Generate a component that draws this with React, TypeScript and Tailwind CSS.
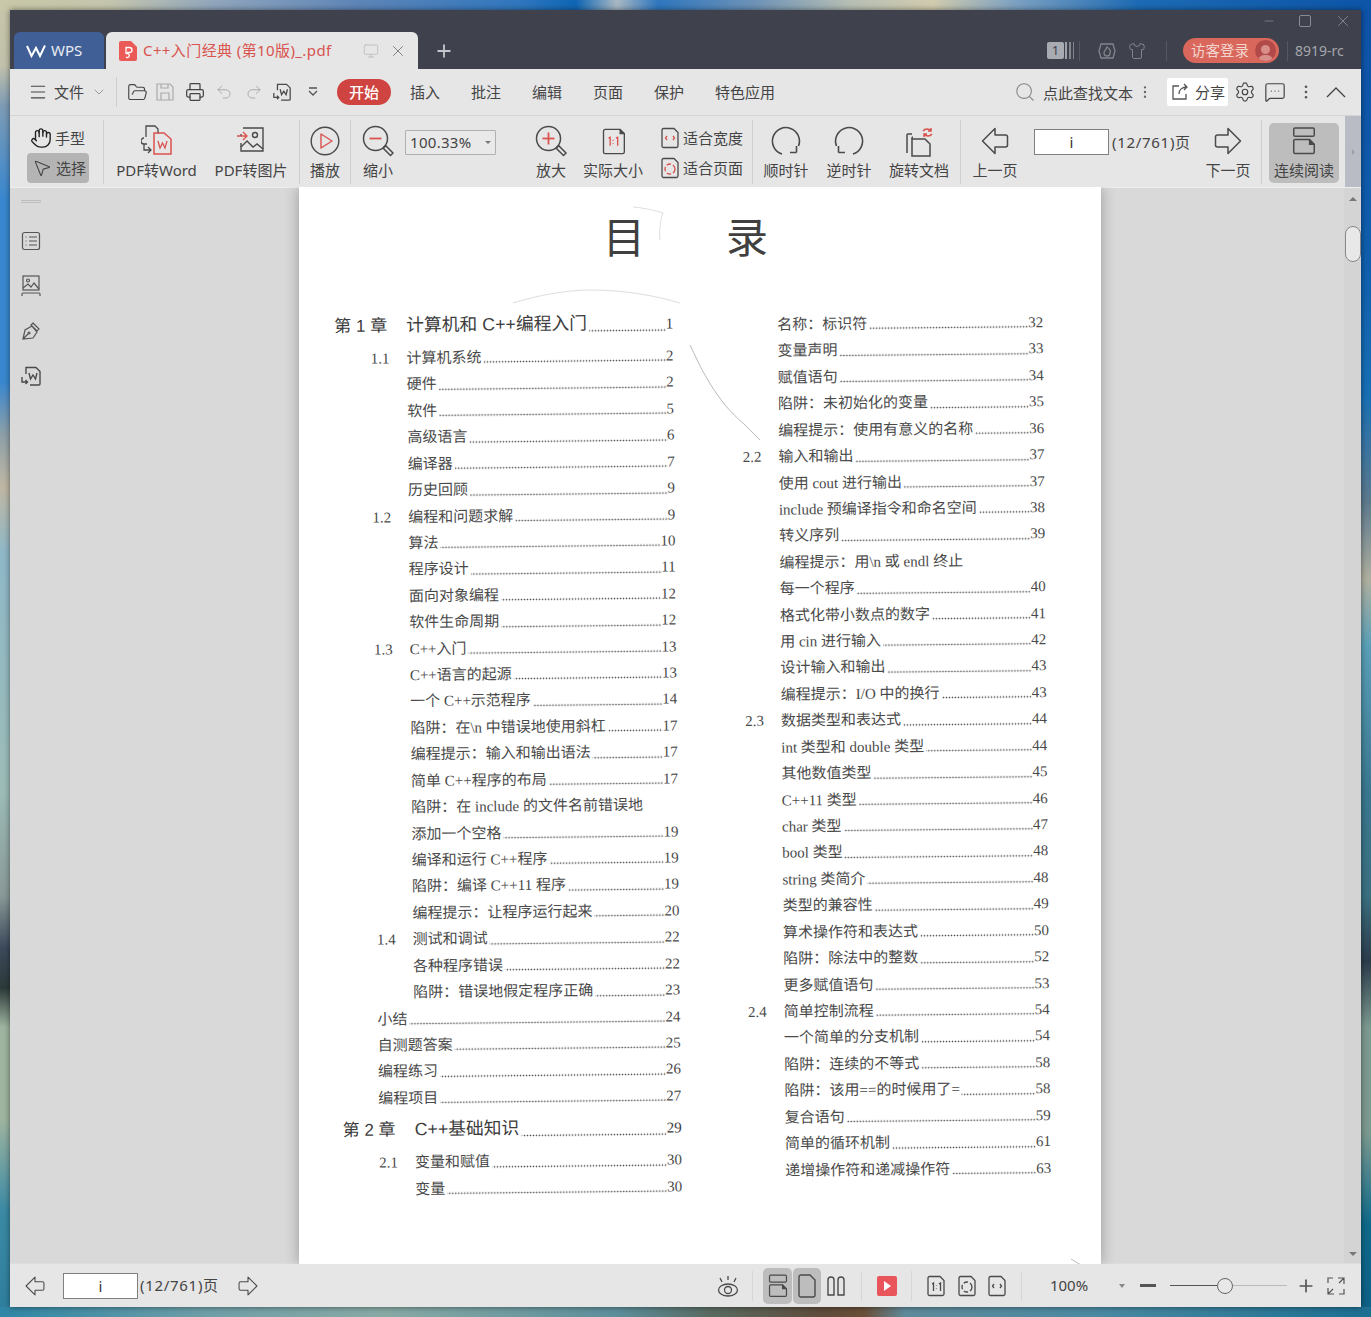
import React from "react";
import { FolderOpen, Printer, Undo2, Redo2, Search, Settings, MessageSquareMore, MoreVertical, ChevronDown, Hand, MousePointer2, Menu, Plus, X, Minus, Shirt, Monitor } from "lucide-react";

const S = "#4a4a4a";
const R = "#d9534f";

function DocW({ s = 22 }: { s?: number }) {
  return (
    <svg width={s} height={s} viewBox="0 0 22 22" fill="none" stroke={S} strokeWidth="1.4">
      <path d="M6 9V2.5h10l4 4V19a1 1 0 0 1-1 1H10" />
      <path d="M9 8l1.5 6L13 10l2.5 4L17 8" />
      <path d="M2 12v5h5M5.500 15l2 2-2 2" />
    </svg>
  );
}
function PageIcon({ w = 30, h = 32, children }: { w?: number; h?: number; children?: React.ReactNode }) {
  return (
    <svg width={w} height={h} viewBox="0 0 30 32" fill="none" stroke={S} strokeWidth="1.6">
      <path d="M3 3.500a2 2 0 0 1 2-2h18l5 5V28.500a2 2 0 0 1-2 2H5a2 2 0 0 1-2-2z" />
      <path d="M23 1.500v5h5" fill={S} />
      {children}
    </svg>
  );
}
function Magnifier({ plus }: { plus?: boolean }) {
  return (
    <svg width="32" height="32" viewBox="0 0 32 32" fill="none" stroke={S} strokeWidth="1.5">
      <circle cx="13.500" cy="13.500" r="12" />
      <path d="M22 22l2-1 7 7-2.500 2.500-7-7z" />
      <path d="M7.500 13.500h12" stroke={R} strokeWidth="1.8" />
      {plus && <path d="M13.500 7.500v12" stroke={R} strokeWidth="1.800" />}
    </svg>
  );
}
function Tool({ w, ml = 0, label, children }: { w: number; ml?: number; label: string; children: React.ReactNode }) {
  return (
    <div className="flex flex-col items-center shrink-0" style={{ width: w, marginLeft: ml }}>
      <div className="h-[34px] mt-[8px] flex items-center justify-center">{children}</div>
      <div className="h-[20px] mt-[2px] leading-[20px] whitespace-nowrap text-[15px] text-[#444]">{label}</div>
    </div>
  );
}
const VLine = ({ ml = 0 }: { ml?: number }) => (
  <div className="w-px h-[64px] bg-[#cfcfcf] shrink-0 self-center" style={{ marginLeft: ml }} />
);
const BLine = ({ ml = 0 }: { ml?: number }) => (
  <div className="w-px h-[30px] bg-[#d6d6d6] shrink-0" style={{ marginLeft: ml }} />
);
function Arrow({ right, s = 28 }: { right?: boolean; s?: number }) {
  return (
    <svg width={s} height={s} viewBox="0 0 28 28" fill="none" stroke={S} strokeWidth="1.500" className={right ? "-scale-x-100" : ""}>
      <path d="M1.500 14L14 1.500V8h10.500a2 2 0 0 1 2 2v8a2 2 0 0 1-2 2H14v6.500z" strokeLinejoin="round" />
    </svg>
  );
}
function FitW({ s = 20, stroke = R }: { s?: number; stroke?: string }) {
  return (
    <svg width={s} height={s + 2} viewBox="0 0 20 22" fill="none" stroke={S} strokeWidth="1.300">
      <path d="M2 3a1.500 1.500 0 0 1 1.500-1.500H14L18 5.500V19a1.500 1.500 0 0 1-1.500 1.500h-13A1.500 1.500 0 0 1 2 19z" />
      <path d="M7 9l-1.500 2L7 13M13 9l1.500 2L13 13" stroke={stroke} />
    </svg>
  );
}
function FitP({ s = 20, stroke = R }: { s?: number; stroke?: string }) {
  return (
    <svg width={s} height={s + 2} viewBox="0 0 20 22" fill="none" stroke={S} strokeWidth="1.300">
      <path d="M2 3a1.500 1.500 0 0 1 1.500-1.500H14L18 5.500V19a1.500 1.500 0 0 1-1.500 1.500h-13A1.500 1.500 0 0 1 2 19z" />
      <circle cx="10" cy="12" r="5" stroke={stroke} strokeDasharray="4.500 2" />
    </svg>
  );
}
function OneOne({ s = 20, stroke = S }: { s?: number; stroke?: string }) {
  return (
    <svg width={s} height={s + 2} viewBox="0 0 20 22" fill="none" stroke={S} strokeWidth="1.300">
      <path d="M2 3a1.500 1.500 0 0 1 1.500-1.500H14L18 5.500V19a1.500 1.500 0 0 1-1.500 1.500h-13A1.500 1.500 0 0 1 2 19z" />
      <path d="M6 9l1.500-1v8M13 9l1.500-1v8M10.500 10.500v.5M10.500 13.500v.5" stroke={stroke} />
    </svg>
  );
}
function Rotate({ flip }: { flip?: boolean }) {
  return (
    <svg width="32" height="32" viewBox="0 0 32 32" fill="none" stroke={S} strokeWidth="1.600" className={flip ? "-scale-x-100" : ""}>
      <path d="M12 29A13.500 13.500 0 1 1 28.500 21" />
      <path d="M26.500 27.500v-6.500M26.500 27.500h-6.500" />
    </svg>
  );
}
function Continuous({ w = 26, h = 28 }: { w?: number; h?: number }) {
  return (
    <svg width={w} height={h} viewBox="0 0 26 30" fill="none" stroke={S} strokeWidth="1.600">
      <rect x="2" y="1" width="22" height="9" rx="1.500" />
      <path d="M2 15a1.500 1.500 0 0 1 1.500-1.500H19l5 5V27a1.500 1.500 0 0 1-1.500 1.500h-19A1.500 1.500 0 0 1 2 27z" />
      <path d="M19 13.500v5h5" fill={S} />
    </svg>
  );
}

type Row = { n?: string; t: string; p?: string; ch?: boolean };

const left: Row[] = [
  { ch: true, n: "第 1 章", t: "计算机和 C++编程入门", p: "1" },
  { n: "1.1", t: "计算机系统", p: "2" },
  { t: "硬件", p: "2" },
  { t: "软件", p: "5" },
  { t: "高级语言", p: "6" },
  { t: "编译器", p: "7" },
  { t: "历史回顾", p: "9" },
  { n: "1.2", t: "编程和问题求解", p: "9" },
  { t: "算法", p: "10" },
  { t: "程序设计", p: "11" },
  { t: "面向对象编程", p: "12" },
  { t: "软件生命周期", p: "12" },
  { n: "1.3", t: "C++入门", p: "13" },
  { t: "C++语言的起源", p: "13" },
  { t: "一个 C++示范程序", p: "14" },
  { t: "陷阱：在\\n 中错误地使用斜杠", p: "17" },
  { t: "编程提示：输入和输出语法", p: "17" },
  { t: "简单 C++程序的布局", p: "17" },
  { t: "陷阱：在 include 的文件名前错误地" },
  { t: "添加一个空格", p: "19" },
  { t: "编译和运行 C++程序", p: "19" },
  { t: "陷阱：编译 C++11 程序", p: "19" },
  { t: "编程提示：让程序运行起来", p: "20" },
  { n: "1.4", t: "测试和调试", p: "22" },
  { t: "各种程序错误", p: "22" },
  { t: "陷阱：错误地假定程序正确", p: "23" },
  { n: "小结", t: "", p: "24" },
  { n: "自测题答案", t: "", p: "25" },
  { n: "编程练习", t: "", p: "26" },
  { n: "编程项目", t: "", p: "27" },
  { ch: true, n: "第 2 章", t: "C++基础知识", p: "29" },
  { n: "2.1", t: "变量和赋值", p: "30" },
  { t: "变量", p: "30" },
];

const right: Row[] = [
  { t: "名称：标识符", p: "32" },
  { t: "变量声明", p: "33" },
  { t: "赋值语句", p: "34" },
  { t: "陷阱：未初始化的变量", p: "35" },
  { t: "编程提示：使用有意义的名称", p: "36" },
  { n: "2.2", t: "输入和输出", p: "37" },
  { t: "使用 cout 进行输出", p: "37" },
  { t: "include 预编译指令和命名空间", p: "38" },
  { t: "转义序列", p: "39" },
  { t: "编程提示：用\\n 或 endl 终止" },
  { t: "每一个程序", p: "40" },
  { t: "格式化带小数点的数字", p: "41" },
  { t: "用 cin 进行输入", p: "42" },
  { t: "设计输入和输出", p: "43" },
  { t: "编程提示：I/O 中的换行", p: "43" },
  { n: "2.3", t: "数据类型和表达式", p: "44" },
  { t: "int 类型和 double 类型", p: "44" },
  { t: "其他数值类型", p: "45" },
  { t: "C++11 类型", p: "46" },
  { t: "char 类型", p: "47" },
  { t: "bool 类型", p: "48" },
  { t: "string 类简介", p: "48" },
  { t: "类型的兼容性", p: "49" },
  { t: "算术操作符和表达式", p: "50" },
  { t: "陷阱：除法中的整数", p: "52" },
  { t: "更多赋值语句", p: "53" },
  { n: "2.4", t: "简单控制流程", p: "54" },
  { t: "一个简单的分支机制", p: "54" },
  { t: "陷阱：连续的不等式", p: "58" },
  { t: "陷阱：该用==的时候用了=", p: "58" },
  { t: "复合语句", p: "59" },
  { t: "简单的循环机制", p: "61" },
  { t: "递增操作符和递减操作符", p: "63" },
];

const Leader = () => (
  <span className="flex-1 min-w-0 self-end mb-[7px] ml-[2px] h-[3px] bg-[radial-gradient(circle,#4a4a4a_0.7px,transparent_1.1px)] bg-[length:3px_3px] bg-repeat-x bg-right" />
);

function TocRow({ r, numW }: { r: Row; numW: number }) {
  if (r.ch) {
    return (
      <div className="flex items-baseline h-[32px] leading-[32px] mt-[2px] mb-[4px] text-[#3c3c3c]">
        <span className="shrink-0 font-['Liberation_Sans','Noto_Sans_CJK_SC',sans-serif] text-[17px] whitespace-pre" style={{ width: numW }}>{r.n}</span>
        <span className="shrink-0 font-['Liberation_Sans','Noto_Sans_CJK_SC',sans-serif] text-[17.800px]">{r.t}</span>
        <Leader />
        <span className="shrink-0 text-[15px]">{r.p}</span>
      </div>
    );
  }
  const wide = !r.t && r.n;
  return (
    <div className="flex items-baseline h-[26.43px] leading-[26.43px] text-[15px] text-[#4a4a4a]">
      {wide ? (
        <span className="shrink-0 pl-[36px] whitespace-pre">{r.n}</span>
      ) : (
        <>
          {r.n ? (
            <span className="shrink-0 whitespace-pre text-right pr-[17px]" style={{ width: numW }}>{r.n}</span>
          ) : (
            <span className="shrink-0" style={{ width: numW }} />
          )}
          <span className="shrink-0 whitespace-pre">{r.t}</span>
        </>
      )}
      {r.p && <Leader />}
      {r.p && <span className="shrink-0">{r.p}</span>}
    </div>
  );
}

const wallpaper =
  "[background:linear-gradient(90deg,#c9c8a8_0%,#c5c6ae_8%,#8fa5bd_16%,#5f86b8_26%,#2f77bf_38%,#0f66b5_42%,#a9b9c4_45%,#2f77bf_48%,#6e93b7_55%,#b7bfb5_62%,#d2ccae_68%,#7ea2c2_74%,#1d6bb5_83%,#0d55a8_100%)_0_0/100%_10px_no-repeat,linear-gradient(90deg,#2f86a6_0%,#6f9fa8_15%,#88aaa5_28%,#5c8f9c_45%,#5a6a60_52%,#5e4c3c_60%,#6a4f38_63%,#5f8b9b_66%,#4a8aa2_80%,#1d6f92_100%)_0_1307px/100%_10px_no-repeat,linear-gradient(180deg,#c8c6aa_0%,#c2c2ac_5%,#7e9cb5_8%,#3a88d0_15%,#3a88d0_29%,#8ea0a8_33%,#c0b8a4_37%,#8fb8c8_42%,#9dbdb8_60%,#8a9a98_68%,#3c4a5c_72%,#2d3a3a_75%,#9fb5a0_78%,#9fb5a0_85%,#3b8aa5_92%,#2e7f9e_100%)_0_0/50%_100%_no-repeat,linear-gradient(180deg,#0e52a8_0%,#0f5fae_20%,#1870b5_30%,#5c7a8e_38%,#b0b0a0_44%,#5aa0b8_49%,#3a7890_60%,#3a7080_68%,#2c3c4c_73%,#7c9a90_78%,#7c9a90_86%,#0e6a8a_93%,#0e5f86_100%)_100%_0/50%_100%_no-repeat]";

export default function App() {
  return (
    <div className={`w-[1371px] h-[1317px] p-[10px] overflow-hidden font-['Noto_Sans','Noto_Sans_CJK_SC',sans-serif] ${wallpaper}`}>
      <div className="w-[1351px] h-[1297px] flex flex-col shadow-[0_0_6px_rgba(0,0,0,0.5)]">
        {/* title bar */}
        <div className="h-[59px] bg-[#3f424d] flex flex-col shrink-0">
          <div className="h-[22px] flex items-center justify-end text-[#8a8c93] pr-[9px] gap-[23px]">
            <Minus size={14} strokeWidth={1.2} />
            <div className="w-[12px] h-[12px] border border-[#8a8c93] rounded-[2px]" />
            <X size={18} strokeWidth={1.2} />
          </div>
          <div className="h-[37px] flex items-center">
            <div className="ml-[4px] w-[90px] h-[37px] rounded-t-[6px] bg-[#3f5f96] text-[#e8ecf4] flex items-center pl-[12px] gap-[5px] text-[15px]">
              <svg width="20" height="14" viewBox="0 0 20 14" fill="none" stroke="#fff" strokeWidth="2"><path d="M1 2l4.500 10L10 4l4 8L19 1.500" /></svg>
              <span>WPS</span>
            </div>
            <div className="ml-[2px] w-[312px] h-[37px] rounded-t-[6px] bg-[#e6e6e6] flex items-center pl-[13px]">
              <svg width="18" height="20" viewBox="0 0 18 20"><path d="M2 0h10l6 6v12a2 2 0 0 1-2 2H2a2 2 0 0 1-2-2V2a2 2 0 0 1 2-2z" fill="#ea5a56" /><path d="M7 13a2 2 0 1 1 0 3M7 13V6.500h3.500a2.500 2.500 0 0 1 0 5H8" fill="none" stroke="#fff" strokeWidth="1.300" /></svg>
              <span className="ml-[6px] text-[15px] tracking-[0.4px] text-[#d9534f] whitespace-nowrap w-[220px]">C++入门经典 (第10版)_.pdf</span>
              <Monitor size={16} strokeWidth={1.2} className="text-[#b9b9b9]" />
              <X size={18} strokeWidth={1.2} className="ml-[10px] text-[#777]" />
            </div>
            <Plus size={20} strokeWidth={2.2} className="ml-[16px] text-[#c5c7cc]" />
            <div className="flex-1" />
            <div className="w-[17px] h-[17px] bg-[#a9abb2] rounded-[2px] text-[#3f424d] text-[13px] leading-[17px] text-center">1</div>
            <div className="ml-[1px] w-[9px] h-[17px] flex gap-[2px]">
              <div className="w-[2px] h-full bg-[#a0a2a8]" /><div className="w-[2px] h-full bg-[#83858c]" /><div className="w-[1px] h-full bg-[#83858c]" />
            </div>
            <div className="ml-[5px] w-px h-[20px] bg-[#55585f]" />
            <svg className="ml-[18px]" width="18" height="18" viewBox="0 0 18 18" fill="none" stroke="#83858c" strokeWidth="1.300"><path d="M3 2h12l2 7-2 7H3L1 9z" /><path d="M9 5c3 2 4 4 3 6a3 3 0 0 1-6 0c0-2 2-3 3-6z" /></svg>
            <Shirt size={18} strokeWidth={1.3} className="ml-[12px] text-[#83858c]" />
            <div className="ml-[20px] w-px h-[20px] bg-[#55585f]" />
            <div className="ml-[16px] w-[96px] h-[25px] rounded-full bg-[#d9675c] flex items-center pl-[8px] text-[14.500px] text-[#f2d5cf]">
              <span className="w-[62px] whitespace-nowrap">访客登录</span>
              <div className="ml-[2px] w-[21px] h-[21px] rounded-full bg-[#b24a4a] flex flex-col items-center justify-end overflow-hidden">
                <div className="w-[9px] h-[9px] rounded-full bg-[#d88f8a]" />
                <div className="mt-[1px] w-[15px] h-[6px] rounded-t-full bg-[#d88f8a]" />
              </div>
            </div>
            <div className="ml-[8px] w-px h-[20px] bg-[#55585f]" />
            <div className="ml-[7px] mr-[16px] w-[50px] text-[14px] text-[#a5a7ac] whitespace-nowrap">8919-rc</div>
          </div>
        </div>

        {/* menu bar */}
        <div className="h-[47px] bg-[#e6e6e6] border-b border-[#d4d4d4] flex items-center shrink-0 text-[15px] text-[#444] pr-[15px]">
          <Menu size={20} strokeWidth={1.3} className="ml-[18px]" />
          <span className="ml-[6px] w-[30px] whitespace-nowrap">文件</span>
          <ChevronDown size={16} strokeWidth={1.2} className="ml-[7px] text-[#888]" />
          <div className="ml-[9px] w-px h-[30px] bg-[#cfcfcf]" />
          <FolderOpen size={21} strokeWidth={1.3} className="ml-[10px] text-[#444]" />
          <svg className="ml-[7px]" width="20" height="20" viewBox="0 0 20 20" fill="none" stroke="#aaa" strokeWidth="1.200"><path d="M2 2h13l3 3v13H2zM6 18v-7h8v7M6 2v4h7V2" /></svg>
          <Printer size={20} strokeWidth={1.5} className="ml-[10px] text-[#444]" />
          <Undo2 size={18} strokeWidth={1.3} className="ml-[10px] text-[#aaa]" />
          <Redo2 size={18} strokeWidth={1.3} className="ml-[12px] text-[#aaa]" />
          <div className="ml-[9px]"><DocW s={20} /></div>
          <svg className="ml-[15px]" width="12" height="12" viewBox="0 0 12 12" fill="none" stroke="#555" strokeWidth="1.300"><path d="M2 2h8M2 5l4 4 4-4" /></svg>
          <div className="ml-[18px] w-[54px] h-[26px] rounded-full bg-[#cf4440] text-white text-center leading-[26px] font-medium">开始</div>
          <span className="ml-[19px] w-[30px] whitespace-nowrap">插入</span>
          <span className="ml-[31px] w-[30px] whitespace-nowrap">批注</span>
          <span className="ml-[31px] w-[30px] whitespace-nowrap">编辑</span>
          <span className="ml-[31px] w-[30px] whitespace-nowrap">页面</span>
          <span className="ml-[31px] w-[30px] whitespace-nowrap">保护</span>
          <span className="ml-[31px] w-[60px] whitespace-nowrap">特色应用</span>
          <div className="flex-1" />
          <Search size={22} strokeWidth={1.2} className="text-[#888]" />
          <span className="ml-[7px] w-[90px] whitespace-nowrap pt-[3px]">点此查找文本</span>
          <MoreVertical size={16} strokeWidth={1.6} className="ml-[4px] text-[#666]" />
          <div className="ml-[14px] w-[61px] h-[28px] bg-white rounded-[2px] flex items-center pl-[4px] gap-[6px]">
            <svg width="18" height="18" viewBox="0 0 18 18" fill="none" stroke="#555" strokeWidth="1.300"><path d="M8 3H2v13h13v-5M8 11c0-4 3-7 8-7M13 1l3 3-3 3" /></svg>
            <span className="whitespace-nowrap">分享</span>
          </div>
          <Settings size={22} strokeWidth={1.3} className="ml-[6px] text-[#444]" />
          <MessageSquareMore size={22} strokeWidth={1.3} className="ml-[8px] text-[#444]" />
          <MoreVertical size={18} strokeWidth={1.6} className="ml-[11px] text-[#555]" />
          <svg className="ml-[11px]" width="20" height="12" viewBox="0 0 20 12" fill="none" stroke="#444" strokeWidth="1.300"><path d="M1 11L10 2l9 9" /></svg>
        </div>

        {/* toolbar */}
        <div className="h-[71px] bg-[#e6e6e6] flex shrink-0 relative shadow-[0_1px_0_#eeeeee]">
          <div className="w-[93px] shrink-0 flex flex-col pt-[7px] pl-[17px] text-[15px] text-[#444]">
            <div className="h-[30px] flex items-center pl-[3px] gap-[3px]">
              <Hand size={22} strokeWidth={1.5} className="text-[#222]" />
              <span className="whitespace-nowrap">手型</span>
            </div>
            <div className="h-[30px] w-[62px] rounded-[4px] bg-[#b4b4b4] flex items-center pl-[5px] gap-[4px]">
              <MousePointer2 size={20} strokeWidth={1.3} />
              <span className="whitespace-nowrap">选择</span>
            </div>
          </div>
          <VLine />
          <Tool w={105} label="PDF转Word">
            <svg width="32" height="32" viewBox="0 0 32 32" fill="none" stroke={S} strokeWidth="1.300">
              <path d="M5 12V1h9l3 3v5" />
              <path d="M3 13a3 3 0 0 0 0 6h3M3 19v6h7M7 22l3 3-3 3" />
              <path d="M13 8h10l7 6v15H13z" stroke={R} strokeWidth="1.500" />
              <path d="M17 16l2 7 2.500-5 2.500 5 2-7" stroke={R} />
            </svg>
          </Tool>
          <Tool w={84} label="PDF转图片">
            <svg width="28" height="28" viewBox="0 0 28 28" fill="none" stroke={S} strokeWidth="1.400">
              <path d="M6 1h20v23H4v-8M4 9V7" />
              <circle cx="18" cy="8" r="2.500" />
              <path d="M4 20l6-6 6 6 4-3 6 5" />
              <path d="M0 9h9M6 5l4 4-4 4" stroke={R} />
            </svg>
          </Tool>
          <div className="w-[6px] shrink-0" />
          <VLine />
          <Tool w={50} label="播放">
            <svg width="30" height="30" viewBox="0 0 30 30" fill="none" stroke={S} strokeWidth="1.400">
              <circle cx="15" cy="15" r="13.800" />
              <path d="M11 8l11 7-11 7z" stroke={R} strokeLinejoin="round" />
            </svg>
          </Tool>
          <VLine />
          <Tool w={54} label="缩小"><Magnifier /></Tool>
          <div className="w-[91px] h-[25px] mt-[14px] bg-[#e9e9e9] border border-[#b0b0b0] rounded-[1px] flex items-center pl-[4px] pr-[4px] text-[15px] tracking-[0.3px] text-[#444] shrink-0">
            <span className="flex-1">100.33%</span>
            <div className="w-0 h-0 border-x-[3px] border-x-transparent border-t-[3px] border-t-[#777]" />
          </div>
          <Tool w={54} ml={28} label="放大"><Magnifier plus /></Tool>
          <Tool w={70} label="实际大小"><PageIcon w={25} h={29}><path d="M9 12l2-1v10M18 12l2-1v10M14.500 14v1M14.500 18v1" stroke={R} /></PageIcon></Tool>
          <div className="w-[104px] pl-[12px] flex flex-col pt-[7px] shrink-0 text-[15px] text-[#444]">
            <div className="h-[30px] flex items-center gap-[3px]"><FitW /><span className="whitespace-nowrap">适合宽度</span></div>
            <div className="h-[30px] flex items-center gap-[3px]"><FitP /><span className="whitespace-nowrap">适合页面</span></div>
          </div>
          <VLine />
          <Tool w={66} label="顺时针"><Rotate /></Tool>
          <Tool w={60} label="逆时针"><Rotate flip /></Tool>
          <Tool w={80} label="旋转文档">
            <svg width="32" height="32" viewBox="0 0 32 32" fill="none" stroke={S} strokeWidth="1.500">
              <path d="M4 28V10a1 1 0 0 1 1-1h4M9 31V14h13l5 5v12z" />
              <path d="M9 14v-1a1 1 0 0 1 1-1" />
              <path d="M20 6a5 5 0 0 1 8 0M28 3v3h-3M29 9a5 5 0 0 1-8 0M21 12V9h3" stroke={R} />
            </svg>
          </Tool>
          <VLine ml={1} />
          <Tool w={68} label="上一页"><Arrow s={28} /></Tool>
          <div className="ml-[5px] w-[75px] h-[26px] mt-[13px] bg-white border border-[#808080] text-center leading-[24px] text-[15px] text-[#333] shrink-0">i</div>
          <div className="ml-[3px] w-[78px] mt-[16px] text-[15px] tracking-[0.7px] text-[#444] whitespace-nowrap shrink-0 leading-[20px]">(12/761)页</div>
          <Tool w={60} ml={8} label="下一页"><Arrow right s={28} /></Tool>
          <VLine ml={3} />
          <div className="ml-[7px] w-[70px] h-[60px] mt-[7px] rounded-[5px] bg-[#bdbdbd] flex flex-col items-center shrink-0">
            <div className="mt-[4px] h-[30px]"><Continuous /></div>
            <span className="text-[15px] leading-[20px] mt-[3px] text-[#444] whitespace-nowrap">连续阅读</span>
          </div>
          <div className="ml-[6px] w-[16px] h-[71px] bg-[#b9bcc4] flex items-center justify-center text-[#888] text-[11px] shrink-0">›</div>
        </div>

        {/* main */}
        <div className="h-[1077px] flex bg-[#d9d9d9] shrink-0 overflow-hidden">
          <div className="w-[289px] shrink-0">
            <div className="w-[42px] flex flex-col items-center pt-[13px] text-[#555]">
              <div className="w-[20px] h-[3px] border-y border-[#bdbdbd]" />
              <div className="h-[45px] mt-[15px] flex items-center">
                <svg width="20" height="20" viewBox="0 0 20 20" fill="none" stroke="#555" strokeWidth="1.200"><rect x="1.500" y="1.500" width="17" height="17" rx="2" /><path d="M4.500 6h1M8 6h8M4.500 10h1M8 10h8M4.500 14h1M8 14h8" /></svg>
              </div>
              <div className="h-[45px] flex items-center">
                <svg width="20" height="22" viewBox="0 0 20 22" fill="none" stroke="#555" strokeWidth="1.200"><rect x="2" y="1" width="16" height="14" /><circle cx="7" cy="5.500" r="1.500" /><path d="M2 13l5-4 3 3 3-4 5 6M1 21v-2a1 1 0 0 1 1-1h16a1 1 0 0 1 1 1v2" /></svg>
              </div>
              <div className="h-[45px] flex items-center">
                <svg width="20" height="20" viewBox="0 0 20 20" fill="none" stroke="#555" strokeWidth="1.200"><path d="M2 18l2-9 7-4 5 6-4 6zM12 2l6 6-2 2-6-6zM2 18l5-5" /><circle cx="8" cy="12" r="1" /></svg>
              </div>
              <div className="h-[45px] flex items-center"><DocW s={22} /></div>
            </div>
          </div>

          <div className="w-[802px] h-full bg-white relative overflow-hidden shrink-0 shadow-[0_0_14px_rgba(0,0,0,0.3)] font-['Liberation_Serif','Noto_Sans_CJK_SC',serif]">
            <svg className="absolute inset-0 pointer-events-none" width="802" height="1077" fill="none" stroke="#c4c4c4" strokeWidth="0.800">
              <path d="M214 116c25-8 55-13 78-13 35 0 65 6 89 13" stroke="#d4d4d4" />
              <path d="M391 158c5 10 9 20 15 30 6 11 13 21 20 30 6 7 13 14 20 20l15 15" stroke="#a8a8a8" />
              <path d="M334 20c11 1 21 3 30 6-3 8-4 18-3 27" stroke="#d6d6d6" />
              <path d="M772 1072l10 6" stroke="#aaa" />
            </svg>
            <div className="pl-[304px] pt-[22px] h-[121px] flex gap-[81px] font-['Noto_Sans_CJK_SC',sans-serif] text-[42px] leading-[52px] text-[#404040]">
              <span>目</span>
              <span>录</span>
            </div>
            <div className="flex pl-[35px]">
              <div className="w-[339px] shrink-0 origin-top-left rotate-[-0.6deg]">
                {left.map((r, i) => <TocRow key={i} r={r} numW={72} />)}
              </div>
              <div className="ml-[67px] mt-[4px] w-[303px] shrink-0 origin-top-left rotate-[-0.55deg]">
                {right.map((r, i) => <TocRow key={i} r={r} numW={37} />)}
              </div>
            </div>
          </div>

          <div className="flex-1 flex justify-end">
            <div className="w-[17px] h-full bg-[#d4d4d4] flex flex-col items-center">
              <div className="mt-[10px] w-0 h-0 border-x-[4px] border-x-transparent border-b-[4px] border-b-[#777]" />
              <div className="mt-[25px] w-[16px] h-[36px] rounded-[8px] bg-[#e8e8e8] border border-[#888]" />
              <div className="flex-1" />
              <div className="mb-[8px] w-0 h-0 border-x-[4px] border-x-transparent border-t-[4px] border-t-[#777]" />
            </div>
          </div>
        </div>

        {/* bottom bar */}
        <div className="h-[43px] bg-[#e6e6e6] flex items-center shrink-0 text-[15px] text-[#444] shadow-[0_-1px_0_#dddddd] pr-[15px]">
          <div className="ml-[14px] w-[22px] flex justify-center"><Arrow s={20} /></div>
          <div className="ml-[17px] w-[75px] h-[26px] bg-white border border-[#808080] text-center leading-[24px] text-[#333]">i</div>
          <span className="ml-[2px] w-[78px] whitespace-nowrap tracking-[0.7px]">(12/761)页</span>
          <div className="ml-[19px] w-[22px] flex justify-center"><Arrow right s={20} /></div>
          <div className="flex-1" />
          <svg width="22" height="22" viewBox="0 0 22 22" fill="none" stroke={S} strokeWidth="1.300"><ellipse cx="11" cy="15" rx="9.500" ry="6" /><circle cx="11" cy="15" r="3.500" /><path d="M11 1v4M3 3l2 4M19 3l-2 4" /></svg>
          <BLine ml={13} />
          <div className="ml-[10px] w-[29px] h-[36px] rounded-[5px] bg-[#bdbdbd] flex items-center justify-center"><Continuous w={20} h={24} /></div>
          <div className="ml-px w-[28px] h-[36px] rounded-[5px] bg-[#bdbdbd] flex items-center justify-center">
            <svg width="18" height="24" viewBox="0 0 18 24" fill="none" stroke={S} strokeWidth="1.400"><path d="M1 3a2 2 0 0 1 2-2h9l5 5v15a2 2 0 0 1-2 2H3a2 2 0 0 1-2-2z" /></svg>
          </div>
          <div className="ml-[4px] w-[22px] flex justify-center">
            <svg width="20" height="22" viewBox="0 0 20 22" fill="none" stroke={S} strokeWidth="1.400"><path d="M2 5a3 3 0 0 1 6 0v15H2zM12 5a3 3 0 0 1 6 0v15h-6z" /></svg>
          </div>
          <BLine ml={14} />
          <div className="ml-[15px] w-[20px] h-[20px] bg-[#e8555a] rounded-[2px] flex items-center justify-center">
            <div className="w-0 h-0 border-y-[5px] border-y-transparent border-l-[7px] border-l-white" />
          </div>
          <BLine ml={14} />
          <div className="ml-[14px] w-[20px]"><OneOne /></div>
          <div className="ml-[11px] w-[20px]"><FitP stroke={S} /></div>
          <div className="ml-[10px] w-[20px]"><FitW stroke={S} /></div>
          <BLine ml={14} />
          <span className="ml-[27px] w-[40px] text-center">100%</span>
          <div className="ml-[30px] w-0 h-0 border-x-[3px] border-x-transparent border-t-[4px] border-t-[#888] mx-[1px]" />
          <div className="ml-[14px] w-[16px] h-[3px] bg-[#555]" />
          <div className="ml-[14px] w-[117px] flex items-center">
            <div className="w-[47px] h-px bg-[#555]" />
            <div className="w-[16px] h-[16px] rounded-full bg-[#e8e8e8] border border-[#666]" />
            <div className="flex-1 h-px bg-[#bbb]" />
          </div>
          <Plus size={20} strokeWidth={2} className="ml-[9px] text-[#555]" />
          <svg className="ml-[10px]" width="20" height="20" viewBox="0 0 20 20" fill="none" stroke="#555" strokeWidth="1.200"><path d="M7 2H2v5M13 18h5v-5M12 2h6v6M18 2l-5 5M8 18H2v-6M2 18l5-5" /></svg>
        </div>
      </div>
    </div>
  );
}
